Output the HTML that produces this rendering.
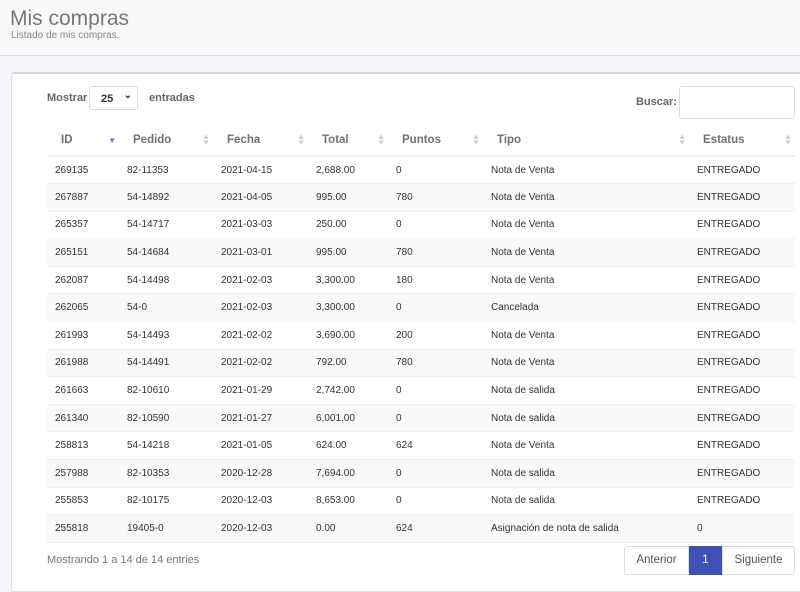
<!DOCTYPE html>
<html><head><meta charset="utf-8"><style>
*{box-sizing:border-box;margin:0;padding:0}
body{width:800px;height:581px;overflow:hidden;background:#f4f5f8;font-family:"Liberation Sans",sans-serif;color:#333;position:relative}
.hdr{position:absolute;left:0;top:0;width:800px;height:56px;background:#f7f8fa;border-bottom:1px solid #dcdfe4}
.hdr h1{position:absolute;left:10px;top:7px;font-size:21px;font-weight:normal;color:#777}
.hdr p{position:absolute;left:11px;top:30px;font-size:10px;color:#888}
.card{position:absolute;left:11px;top:72px;width:800px;height:520px;background:#fff;border:1px solid #dfe3e8;border-top:2px solid #d3d9e1;border-radius:3px}
.lbl{position:absolute;font-size:11px;font-weight:bold;color:#666}
.sel{position:absolute;left:89px;top:86px;width:49px;height:24px;border:1px solid #ddd;border-radius:3px;font-size:11px;font-weight:bold;padding:6px 0 0 11px;color:#333}
.sel span{position:absolute;right:5px;top:3px;font-size:10px}
.search{position:absolute;left:679px;top:86px;width:116px;height:33px;border:1px solid #ddd;border-radius:3px}
table{position:absolute;left:47px;top:125px;width:748px;border-collapse:collapse;font-size:10px}
th{height:31px;text-align:left;font-size:11.5px;color:#707070;font-weight:bold;padding-left:14px;border-bottom:2px solid #eceef1;position:relative}
th i{position:absolute;right:3px;top:9px;font-style:normal;font-size:8px;color:#ccc;line-height:6px}
td{height:27.6px;padding-left:8px;border-bottom:1px solid #eef0f2;color:#333}
tr:nth-child(odd) td{background:#f9f9fb}
.foot{position:absolute;left:47px;top:554px;font-size:11px;color:#777}
.pg{position:absolute;top:546px;height:29px;border:1px solid #ddd;font-size:11.5px;color:#555;text-align:center;line-height:27px;background:#fff}
</style></head><body>
<div class="hdr"><h1>Mis compras</h1><p>Listado de mis compras.</p></div>
<div class="card"></div>
<div class="lbl" style="left:47px;top:92px">Mostrar</div>
<div class="sel">25<span>&#8964;</span></div>
<div class="lbl" style="left:149px;top:92px">entradas</div>
<div class="lbl" style="left:636px;top:96px">Buscar:</div>
<div class="search"></div>
<table>
<colgroup><col style="width:72px"><col style="width:94px"><col style="width:95px"><col style="width:80px"><col style="width:95px"><col style="width:206px"><col></colgroup>
<tr><th>ID<i style="color:#6b76c9;top:13px">&#9660;</i></th><th>Pedido<i>&#9650;<br>&#9660;</i></th><th>Fecha<i>&#9650;<br>&#9660;</i></th><th>Total<i>&#9650;<br>&#9660;</i></th><th>Puntos<i>&#9650;<br>&#9660;</i></th><th>Tipo<i>&#9650;<br>&#9660;</i></th><th>Estatus<i>&#9650;<br>&#9660;</i></th></tr>
<tr><td>269135</td><td>82-11353</td><td>2021-04-15</td><td>2,688.00</td><td>0</td><td>Nota de Venta</td><td>ENTREGADO</td></tr>
<tr><td>267887</td><td>54-14892</td><td>2021-04-05</td><td>995.00</td><td>780</td><td>Nota de Venta</td><td>ENTREGADO</td></tr>
<tr><td>265357</td><td>54-14717</td><td>2021-03-03</td><td>250.00</td><td>0</td><td>Nota de Venta</td><td>ENTREGADO</td></tr>
<tr><td>265151</td><td>54-14684</td><td>2021-03-01</td><td>995.00</td><td>780</td><td>Nota de Venta</td><td>ENTREGADO</td></tr>
<tr><td>262087</td><td>54-14498</td><td>2021-02-03</td><td>3,300.00</td><td>180</td><td>Nota de Venta</td><td>ENTREGADO</td></tr>
<tr><td>262065</td><td>54-0</td><td>2021-02-03</td><td>3,300.00</td><td>0</td><td>Cancelada</td><td>ENTREGADO</td></tr>
<tr><td>261993</td><td>54-14493</td><td>2021-02-02</td><td>3,690.00</td><td>200</td><td>Nota de Venta</td><td>ENTREGADO</td></tr>
<tr><td>261988</td><td>54-14491</td><td>2021-02-02</td><td>792.00</td><td>780</td><td>Nota de Venta</td><td>ENTREGADO</td></tr>
<tr><td>261663</td><td>82-10610</td><td>2021-01-29</td><td>2,742.00</td><td>0</td><td>Nota de salida</td><td>ENTREGADO</td></tr>
<tr><td>261340</td><td>82-10590</td><td>2021-01-27</td><td>6,001.00</td><td>0</td><td>Nota de salida</td><td>ENTREGADO</td></tr>
<tr><td>258813</td><td>54-14218</td><td>2021-01-05</td><td>624.00</td><td>624</td><td>Nota de Venta</td><td>ENTREGADO</td></tr>
<tr><td>257988</td><td>82-10353</td><td>2020-12-28</td><td>7,694.00</td><td>0</td><td>Nota de salida</td><td>ENTREGADO</td></tr>
<tr><td>255853</td><td>82-10175</td><td>2020-12-03</td><td>8,653.00</td><td>0</td><td>Nota de salida</td><td>ENTREGADO</td></tr>
<tr><td>255818</td><td>19405-0</td><td>2020-12-03</td><td>0.00</td><td>624</td><td>Asignación de nota de salida</td><td>0</td></tr>
</table>
<div class="foot">Mostrando 1 a 14 de 14 entries</div>
<div class="pg" style="left:624px;width:65px;border-radius:3px 0 0 3px">Anterior</div>
<div class="pg" style="left:689px;width:33px;background:#3f51b5;border-color:#3f51b5;color:#fff">1</div>
<div class="pg" style="left:722px;width:73px;border-radius:0 3px 3px 0">Siguiente</div>
</body></html>
